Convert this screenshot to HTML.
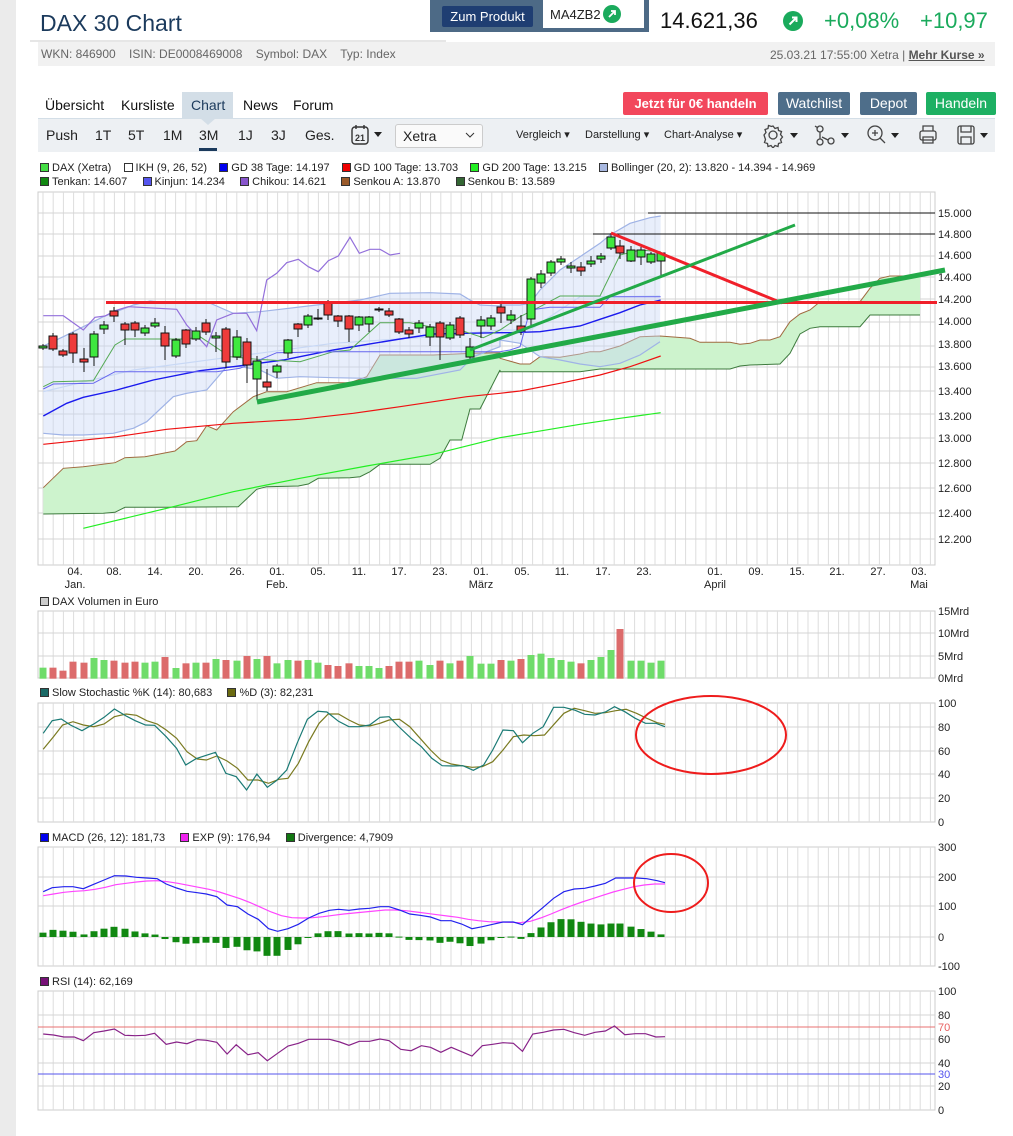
<!DOCTYPE html>
<html><head><meta charset="utf-8">
<style>
*{margin:0;padding:0;box-sizing:border-box}
html,body{width:1013px;height:1136px;overflow:hidden;background:#fff;font-family:"Liberation Sans",sans-serif;position:relative}
.a{position:absolute;white-space:nowrap}
.n{font-family:"Liberation Sans Narrow","Liberation Sans",sans-serif}
.lg{font-size:11px;color:#222}
.sq{display:inline-block;width:9px;height:9px;border:1px solid #333;vertical-align:-1px;margin-right:3px}
.ax{font-size:11px;color:#222}
.btn{position:absolute;color:#fff;font-size:14px;text-align:center;line-height:23px;border-radius:2px}
.tab{font-size:14px;color:#111}
.tb{font-size:14px;color:#222}
</style></head><body>
<div class="a" style="left:0;top:0;width:16px;height:1136px;background:#ebebeb"></div>
<div class="a" style="left:40px;top:10px;font-size:23px;color:#1b3a5c">DAX 30 Chart</div>
<div class="a" style="left:30px;top:40px;width:416px;height:2px;background:#e6e6e6"></div>
<div class="a" style="left:430px;top:0;width:219px;height:32px;background:#4d6a86"></div>
<div class="a" style="left:543px;top:0;width:101px;height:28px;background:#fff"></div>
<div class="btn n" style="left:442px;top:6px;width:91px;height:21px;line-height:21px;background:#1f3e72;font-size:13px">Zum Produkt</div>
<div class="a n" style="left:550px;top:7px;font-size:13px;color:#222">MA4ZB2</div>
<svg class="a" style="left:603px;top:5px" width="18" height="18"><circle cx="9" cy="9" r="9" fill="#1aaa5c"/><path d="M6 12L12 6M8 6h4v4" stroke="#fff" stroke-width="1.8" fill="none"/></svg>
<div class="a" style="left:660px;top:8px;font-size:22px;color:#111">14.621,36</div>
<svg class="a" style="left:783px;top:11px" width="20" height="20"><circle cx="10" cy="10" r="10" fill="#1aaa5c"/><path d="M6.5 13.5L13.5 6.5M9 6.5h4.5v4.5" stroke="#fff" stroke-width="2" fill="none"/></svg>
<div class="a" style="left:824px;top:8px;font-size:22px;color:#1aaa5c">+0,08%</div>
<div class="a" style="left:920px;top:8px;font-size:22px;color:#1aaa5c">+10,97</div>
<div class="a" style="left:38px;top:42px;width:957px;height:24px;background:#f1f1f1"></div>
<div class="a" style="left:41px;top:47px;font-size:12px;color:#666">WKN: 846900 &nbsp;&nbsp; ISIN: DE0008469008 &nbsp;&nbsp; Symbol: DAX &nbsp;&nbsp; Typ: Index</div>
<div class="a" style="left:770px;top:48px;font-size:12px;color:#666">25.03.21 17:55:00 Xetra | <b style="text-decoration:underline;color:#555">Mehr Kurse »</b></div>

<div class="a" style="left:182px;top:92px;width:51px;height:26px;background:#d3dee7"></div>
<div class="a tab" style="left:45px;top:97px">Übersicht</div>
<div class="a tab" style="left:121px;top:97px">Kursliste</div>
<div class="a tab" style="left:191px;top:97px;color:#1b3a5c">Chart</div>
<div class="a tab" style="left:243px;top:97px">News</div>
<div class="a tab" style="left:293px;top:97px">Forum</div>
<div class="btn" style="left:623px;top:92px;width:145px;background:#f2475c;font-weight:bold;font-size:13px">Jetzt für 0€ handeln</div>
<div class="btn" style="left:778px;top:92px;width:72px;background:#4e6e8a">Watchlist</div>
<div class="btn" style="left:860px;top:92px;width:57px;background:#4e6e8a">Depot</div>
<div class="btn" style="left:926px;top:92px;width:70px;background:#1db063">Handeln</div>

<div class="a" style="left:38px;top:118px;width:957px;height:34px;background:#edf0f3;border-top:1px solid #d3dee7"></div>
<svg class="a" style="left:200px;top:118px" width="16" height="8"><path d="M0 0L8 7L16 0Z" fill="#d3dee7"/></svg>
<div class="a tb" style="left:46px;top:127px">Push</div>
<div class="a tb" style="left:95px;top:127px">1T</div>
<div class="a tb" style="left:128px;top:127px">5T</div>
<div class="a tb" style="left:163px;top:127px">1M</div>
<div class="a tb" style="left:199px;top:127px">3M</div>
<div class="a" style="left:199px;top:148px;width:18px;height:3px;background:#1b3a5c"></div>
<div class="a tb" style="left:238px;top:127px">1J</div>
<div class="a tb" style="left:271px;top:127px">3J</div>
<div class="a tb" style="left:305px;top:127px">Ges.</div>
<svg class="a" style="left:350px;top:124px" width="36" height="22"><rect x="2" y="3" width="16" height="17" rx="3" fill="none" stroke="#333" stroke-width="1.4"/><path d="M6 1v4M14 1v4" stroke="#333" stroke-width="1.4"/><text x="10" y="17" font-size="9" font-family="Liberation Sans" text-anchor="middle" font-weight="bold" fill="#333">21</text><path d="M24 8h8l-4 5z" fill="#222"/></svg>
<div class="a" style="left:395px;top:124px;width:88px;height:24px;background:#fafafa;border:1px solid #ccc;border-radius:3px"></div>
<div class="a tb" style="left:403px;top:128px">Xetra</div>
<svg class="a" style="left:465px;top:131px" width="10" height="8"><path d="M1 2l4 4 4-4" stroke="#333" fill="none"/></svg>
<div class="a n" style="left:516px;top:128px;font-size:11px;color:#222">Vergleich ▾</div>
<div class="a n" style="left:585px;top:128px;font-size:11px;color:#222">Darstellung ▾</div>
<div class="a n" style="left:664px;top:128px;font-size:11px;color:#222">Chart-Analyse ▾</div>
<svg class="a" style="left:760px;top:122px" width="240" height="26">
<g fill="none" stroke="#444" stroke-width="1.3">
<circle cx="13" cy="13" r="4"/><path d="M13 4l2 2.5 3-1 .5 3 3 1-1 3 2 2.5-2 2.5 1 3-3 1-.5 3-3-1-2 2.5-2-2.5-3 1-.5-3-3-1 1-3L4 13l2-2.5-1-3 3-1 .5-3 3 1z"/>
<circle cx="60" cy="7" r="3"/><circle cx="60" cy="20" r="3"/><circle cx="71" cy="19" r="3"/><path d="M60 10v7M62 15l6 3M58 6l-3-2"/>
<circle cx="115" cy="11" r="7"/><path d="M120 16l5 5M112 11h6M115 8v6"/>
<rect x="160" y="9" width="16" height="9" rx="2"/><path d="M163 9V4h10v5M163 15h10v6h-10z"/>
<rect x="198" y="4" width="16" height="18" rx="2"/><path d="M201 4v6h10V4M201 22v-7h10v7"/>
</g>
<g fill="#222"><path d="M30 11h8l-4 5z"/><path d="M81 11h8l-4 5z"/><path d="M131 11h8l-4 5z"/><path d="M220 11h8l-4 5z"/></g>
</svg>

<div class="a lg" style="left:40px;top:162px"><span class="sq" style="background:#44dd44"></span>DAX (Xetra) &nbsp;&nbsp; <span class="sq" style="background:#fff"></span>IKH (9, 26, 52) &nbsp;&nbsp; <span class="sq" style="background:#0000ee"></span>GD 38 Tage: 14.197 &nbsp;&nbsp; <span class="sq" style="background:#ee0000"></span>GD 100 Tage: 13.703 &nbsp;&nbsp; <span class="sq" style="background:#22ee22"></span>GD 200 Tage: 13.215 &nbsp;&nbsp; <span class="sq" style="background:#a8b8e0"></span>Bollinger (20, 2): 13.820 - 14.394 - 14.969</div>
<div class="a lg" style="left:40px;top:176px"><span class="sq" style="background:#118811"></span>Tenkan: 14.607 &nbsp;&nbsp;&nbsp; <span class="sq" style="background:#5555ee"></span>Kinjun: 14.234 &nbsp;&nbsp;&nbsp; <span class="sq" style="background:#8855cc"></span>Chikou: 14.621 &nbsp;&nbsp;&nbsp; <span class="sq" style="background:#9a5a2a"></span>Senkou A: 13.870 &nbsp;&nbsp;&nbsp; <span class="sq" style="background:#336633"></span>Senkou B: 13.589</div>

<svg id="g" class="a" style="left:0;top:0" width="1013" height="1136" font-family="Liberation Sans" font-size="11" fill="#222">
<g id="dyn"></g>
<g>
<text x="938" y="217">15.000</text><text x="938" y="238">14.800</text><text x="938" y="259">14.600</text><text x="938" y="281">14.400</text><text x="938" y="303">14.200</text><text x="938" y="325">14.000</text><text x="938" y="348">13.800</text><text x="938" y="370">13.600</text><text x="938" y="395">13.400</text><text x="938" y="420">13.200</text><text x="938" y="442">13.000</text><text x="938" y="467">12.800</text><text x="938" y="492">12.600</text><text x="938" y="517">12.400</text><text x="938" y="543">12.200</text>
</g>
<g text-anchor="middle">
<text x="75" y="575">04.</text><text x="75" y="588">Jan.</text><text x="114" y="575">08.</text><text x="155" y="575">14.</text><text x="196" y="575">20.</text><text x="237" y="575">26.</text><text x="277" y="575">01.</text><text x="277" y="588">Feb.</text><text x="318" y="575">05.</text><text x="359" y="575">11.</text><text x="399" y="575">17.</text><text x="440" y="575">23.</text><text x="481" y="575">01.</text><text x="481" y="588">März</text><text x="522" y="575">05.</text><text x="562" y="575">11.</text><text x="603" y="575">17.</text><text x="644" y="575">23.</text><text x="715" y="575">01.</text><text x="715" y="588">April</text><text x="756" y="575">09.</text><text x="797" y="575">15.</text><text x="837" y="575">21.</text><text x="878" y="575">27.</text><text x="919" y="575">03.</text><text x="919" y="588">Mai</text>
</g>
<g>
<text x="938" y="615">15Mrd</text><text x="938" y="637">10Mrd</text><text x="938" y="660">5Mrd</text><text x="938" y="682">0Mrd</text>
<text x="938" y="707">100</text><text x="938" y="731">80</text><text x="938" y="755">60</text><text x="938" y="778">40</text><text x="938" y="802">20</text><text x="938" y="826">0</text>
<text x="938" y="851">300</text><text x="938" y="881">200</text><text x="938" y="910">100</text><text x="938" y="941">0</text><text x="938" y="970">-100</text>
<text x="938" y="995">100</text><text x="938" y="1019">80</text><text x="938" y="1031" fill="#e86060">70</text><text x="938" y="1043">60</text><text x="938" y="1067">40</text><text x="938" y="1078" fill="#5555ee">30</text><text x="938" y="1090">20</text><text x="938" y="1114">0</text>
</g>
</svg>
<div class="a lg" style="left:40px;top:596px"><span class="sq" style="background:#ccc"></span>DAX Volumen in Euro</div>
<div class="a lg" style="left:40px;top:687px"><span class="sq" style="background:#1a6a66"></span>Slow Stochastic %K (14): 80,683 &nbsp;&nbsp;&nbsp; <span class="sq" style="background:#6a6a10"></span>%D (3): 82,231</div>
<div class="a lg" style="left:40px;top:832px"><span class="sq" style="background:#0000ee"></span>MACD (26, 12): 181,73 &nbsp;&nbsp;&nbsp; <span class="sq" style="background:#ee22ee"></span>EXP (9): 176,94 &nbsp;&nbsp;&nbsp; <span class="sq" style="background:#117711"></span>Divergence: 4,7909</div>
<div class="a lg" style="left:40px;top:976px"><span class="sq" style="background:#771177"></span>RSI (14): 62,169</div>

<script>
(function(){
var NS="http://www.w3.org/2000/svg",G=document.getElementById("dyn");
function el(t,a){var e=document.createElementNS(NS,t);for(var k in a)e.setAttribute(k,a[k]);G.appendChild(e);return e;}
function pl(pts,st,w,fill){el(fill?"polygon":"polyline",{points:pts.map(function(p){return p[0].toFixed(1)+","+p[1].toFixed(1)}).join(" "),stroke:st||"none","stroke-width":w||1,fill:fill||"none"});}
function Z2(a){var r=[];for(var i=0;i<a.length;i+=2)r.push([a[i]/3,190+a[i+1]/3]);return r;}
function Z3(a){var r=[];for(var i=0;i<a.length;i+=2)r.push([480+a[i]/3,190+a[i+1]/3]);return r;}
function ZL(a,b){var r=[];for(var i=0;i<a.length;i+=2)r.push([38+(a[i]-60)*0.6477,b+a[i+1]/3]);return r;}
function grid(y0,y1,hs){
 el("rect",{x:38,y:y0,width:897,height:y1-y0,fill:"#fff",stroke:"#ccc"});
 for(var x=43;x<935;x+=10.2)el("line",{x1:x.toFixed(1),y1:y0,x2:x.toFixed(1),y2:y1,stroke:"#ddd"});
 hs.forEach(function(y){el("line",{x1:38,y1:y,x2:935,y2:y,stroke:"#d4d4d4"});});
}
grid(192,565,[213,234,256,277,299,322,346,367,391,414,438,463,488,513,539]);
grid(611,678,[633,656]);
grid(703,822,[727,751,774,798]);
grid(847,966,[877,906,937]);
grid(991,1110,[1015,1039,1063,1086]);
// Ichimoku cloud
var A=Z2([130,893,190,835,250,830,345,818,375,803,435,800,525,783,560,755,590,752,620,707,650,720,700,665,760,620,800,605,860,605,950,578,1050,578,1100,560,1140,495,1300,495,1420,490,1500,488]).concat(Z3([60,505,120,522,150,522,180,500,240,502,300,492,330,485,360,485,420,468,480,440,540,438,570,440,630,445,660,457,750,457,780,463,810,460,840,450,870,450,900,440,930,395,960,372,990,360,1020,335,1140,335,1170,295,1200,265,1230,258,1320,258]));
var B=Z2([130,972,310,970,345,967,375,952,500,952,715,950,770,898,800,890,895,888,925,882,955,865,1050,863,1080,860,1110,845,1140,823,1290,823,1320,805,1350,750,1385,750,1410,657,1440,657,1500,540]).concat(Z3([60,545,300,545,360,537,750,537,780,528,810,525,900,522,930,490,960,432,990,415,1020,410,1140,410,1170,375,1320,375]));
pl(A.concat(B.slice().reverse()),null,0,"#cdf3cd");
pl(A,"#a06a40",1);pl(B,"#3d7a3d",1);
// Bollinger
var U=Z2([130,468,190,440,250,410,310,380,400,345,450,333,520,340,620,335,700,370,780,365,950,345,1080,330,1170,310,1290,308,1380,312,1410,330,1440,345,1500,348]).concat(Z3([60,345,120,345,150,340,180,300,240,240,300,200,360,160,390,135,450,100,510,83,542,78]));
var L=Z2([130,730,190,735,250,735,340,730,400,715,440,695,520,620,560,610,620,600,680,530,720,530,780,540,830,565,900,560,1000,563,1100,565,1250,565,1380,540,1420,500,1500,470]).concat(Z3([60,450,120,460,150,480,180,500,240,510,300,522,360,530,420,520,480,495,540,455]));
pl(U.concat(L.slice().reverse()),null,0,"rgba(200,215,245,0.42)");
pl(U,"#9fb3e6",1.2);pl(L,"#9fb3e6",1.2);
pl(Z2([130,605,400,540,700,500,1000,460,1300,440,1500,420]).concat(Z3([150,420,300,320,420,320,540,318])),"#c8d8f5",1.2);
// GDs
pl(Z2([130,763,350,740,500,718,700,700,900,688,1060,670,1200,650,1400,620,1500,610]).concat(Z3([120,603,240,580,360,555,450,530,542,498])),"#ee1111",1.2);
pl(Z2([250,1015,500,955,700,905,900,865,1100,828,1300,793,1500,743]).concat(Z3([150,728,300,703,420,685,542,668])),"#22ee22",1.2);
pl(Z2([130,678,200,640,250,622,350,600,460,570,600,542,700,530,850,510,1000,480,1200,447,1300,432,1400,430,1500,428]).concat(Z3([90,428,180,425,300,408,360,388,420,368,480,345,542,330])),"#1a1aee",1.4);
// Tenkan/Kijun/Chikou
pl(Z2([130,590,160,575,280,572,345,465,375,447,560,447,600,440,690,500,770,508,900,515,1000,485,1050,480,1140,398,1230,398,1290,410,1380,420,1450,443,1500,420]).concat(Z3([60,420,120,380,180,350,240,318,360,318,420,195,480,180,542,185])),"#55aa55",1);
pl(Z2([130,597,160,582,280,580,345,545,650,545,720,535,830,488,1000,485,1500,485]).concat(Z3([90,480,120,470,150,360,210,352,360,352,390,320,542,320])),"#6666ee",1);
pl(Z2([130,377,190,377,250,420,285,382,315,378,345,362,385,350,530,358,560,405,620,470,650,390,700,370,740,370,770,422,800,270,830,250,860,218,895,208,925,230,955,245,985,212,1015,198,1050,142,1078,190,1110,178,1140,178,1170,195,1200,190]),"#9370db",1.2);
// candles
var C=[[43,346,348,"g"],[53,336,349,"r",333,351],[63,351,355,"r"],[73,334,353,"r",332,363],[84,359,362,"r",348,372],[94,334,357,"g",331,366],[104,325,329,"g",321,334],[114,311,316,"r",307,322],[125,324,330,"r",322,345],[135,323,330,"r",321,337],[145,328,333,"g",325,336],[155,323,326,"g",318,328],[165,333,346,"r",326,360],[176,340,356,"g"],[186,330,344,"r",329,348],[196,331,339,"g",327,341],[206,323,332,"r",319,335],[216,336,338,"g",332,352],[226,329,362,"r",327,368],[237,337,357,"g",330,360],[247,342,365,"r",338,383],[257,361,379,"g",356,400],[267,382,387,"r",369,391],[277,366,372,"g",364,378],[288,340,353,"g",339,358],[298,324,329,"r",323,337],[308,316,325,"g",314,328],[318,318,319,"g",309,320],[328,303,315,"r",300,320],[338,316,321,"r",315,327],[349,316,329,"r",315,342],[359,317,325,"g",316,331],[369,317,324,"g",316,332],[379,309,310,"g",307,312],[389,311,315,"r",308,317],[399,319,332,"r",318,334],[409,330,334,"r",327,338],[419,323,328,"g",320,333],[430,327,337,"g",324,346],[440,323,337,"r",321,360],[450,325,338,"g",322,340],[460,318,335,"r",316,338],[470,347,357,"g",338,360],[481,320,326,"g",316,338],[491,318,326,"g",315,330],[501,307,313,"r",302,323],[511,315,320,"g",310,324],[521,326,331,"r",315,335],[531,279,319,"g",277,326],[541,274,283,"g",270,288],[551,262,273,"g",260,276],[561,259,262,"g",256,265],[571,266,268,"g",262,273],[581,267,271,"r",262,276],[591,261,264,"g",256,267],[601,256,259,"g",253,263],[611,237,248,"g",233,250],[620,246,253,"r",240,259],[631,250,261,"g",246,262],[641,250,257,"g",247,265],[651,254,262,"g",252,264],[661,253,261,"g",252,276]];
C.forEach(function(c){var wt=c[4]||c[1]-2,wb=c[5]||c[2]+2;
 el("line",{x1:c[0],y1:wt,x2:c[0],y2:wb,stroke:"#111"});
 el("rect",{x:c[0]-4,y:c[1],width:8,height:Math.max(1,c[2]-c[1]),fill:c[3]=="g"?"#3fe83f":"#ee3b3b",stroke:"#111","stroke-width":1});});
// trendlines
el("line",{x1:648,y1:213,x2:935,y2:213,stroke:"#111"});
el("line",{x1:593,y1:234,x2:935,y2:234,stroke:"#111"});
el("line",{x1:106,y1:302.5,x2:937,y2:302.5,stroke:"#f0202a","stroke-width":3});
el("line",{x1:611,y1:233,x2:782,y2:303,stroke:"#f0202a","stroke-width":3});
el("line",{x1:257,y1:402,x2:945,y2:270,stroke:"#22aa48","stroke-width":5});
el("line",{x1:470,y1:350,x2:795,y2:225,stroke:"#22aa48","stroke-width":3});
// volume
var V=[233,233,242,215,218,204,210,212,218,215,218,215,201,234,220,218,218,207,210,212,198,207,198,220,210,212,210,218,225,228,220,228,228,234,228,215,215,212,225,212,220,212,198,221,221,210,212,207,195,191,204,210,215,220,210,201,180,117,212,212,218,212];
C.forEach(function(c,i){var t=590+V[i]/3;el("rect",{x:c[0]-3.5,y:t,width:7,height:678.7-t,fill:c[3]=="g"?"#6fdc6a":"#dc6b6b"});});
// stoch
pl(ZL([68,478,84,440,98,405,114,395,130,405,146,410,162,402,178,380,196,372,212,376,228,392,244,402,258,420,274,445,290,485,306,507,320,510,336,498,352,513,368,535,384,570,400,570,416,580,432,568,446,565,462,520,478,455,494,400,508,372,524,372,540,390,556,405,572,408,588,400,602,390,618,388,634,410,650,445,666,480,682,510,698,522,714,527,730,532,746,530,762,515,778,480,794,440,810,435,826,437,842,435,858,400,872,370,888,355,904,362,920,370,936,368,952,362,968,358,984,370,1000,385,1016,398,1028,403],590),"#7a7a20",1.2);
pl(ZL([68,430,82,392,96,387,110,405,128,422,148,400,162,382,178,357,196,378,210,392,226,405,240,406,258,440,274,475,288,525,304,506,318,497,334,487,350,550,366,560,382,600,398,552,414,592,428,572,444,540,460,460,476,388,492,364,506,366,524,394,540,410,556,410,572,405,588,382,602,380,616,408,636,445,652,470,668,505,684,527,700,528,716,527,732,541,748,525,762,480,778,420,794,422,808,458,824,430,840,410,856,352,872,352,888,360,904,373,920,375,936,366,950,350,966,365,982,385,998,400,1014,400,1028,410],590),"#1a7a75",1.2);
el("ellipse",{cx:711,cy:735,rx:75,ry:39,fill:"none",stroke:"#ee1c1c","stroke-width":2});
// MACD
var MB=ZL([68,185,82,173,100,170,114,170,130,176,146,163,162,150,178,137,196,138,212,142,228,144,244,146,258,162,274,174,290,184,306,188,320,192,336,200,352,225,368,230,384,252,400,268,416,296,430,304,446,296,462,283,478,264,494,250,510,241,524,238,540,241,556,237,572,235,588,230,602,230,618,240,634,252,650,256,666,261,682,272,698,272,714,282,730,296,746,290,762,283,778,276,794,276,808,284,824,258,840,232,856,205,872,185,888,177,904,175,920,168,936,160,952,144,968,144,984,144,1000,146,1016,152,1028,158],830);
var ME=ZL([68,197,84,192,100,187,116,184,132,182,148,178,164,172,180,164,196,160,212,156,228,153,244,152,260,155,276,160,292,166,308,172,324,178,340,186,356,196,372,206,388,218,404,232,420,246,436,257,452,263,468,264,484,263,500,260,516,256,532,252,548,249,564,246,580,243,596,240,612,240,628,242,644,246,660,250,676,254,692,258,708,262,724,268,740,272,756,275,772,276,788,277,804,278,820,274,836,264,852,252,868,239,884,227,900,216,916,206,932,196,948,186,964,178,980,170,996,165,1012,162,1028,162],830);
function itp(P,x){for(var i=1;i<P.length;i++)if(P[i][0]>=x){var a=P[i-1],b=P[i],t=(x-a[0])/(b[0]-a[0]||1);return a[1]+t*(b[1]-a[1]);}return P[P.length-1][1];}
C.forEach(function(c){var d=(itp(ME,c[0])-itp(MB,c[0]))*1.1;var y=d>0?937-d:937;el("rect",{x:c[0]-3.5,y:y,width:7,height:Math.max(1,Math.abs(d)),fill:"#118811"});});
pl(ME,"#ff44ff",1.2);pl(MB,"#2222ee",1.2);
el("ellipse",{cx:671,cy:883,rx:37,ry:29,fill:"none",stroke:"#ee1c1c","stroke-width":2});
// RSI
el("line",{x1:38,y1:1027,x2:935,y2:1027,stroke:"#e87070"});
el("line",{x1:38,y1:1074,x2:935,y2:1074,stroke:"#5555ee"});
pl(ZL([68,612,84,615,100,621,116,621,130,632,146,608,162,603,178,597,194,616,210,617,226,616,240,610,258,643,274,636,290,641,306,629,320,631,336,637,352,672,366,644,384,674,400,668,414,692,430,670,446,648,462,640,478,628,494,628,510,628,526,636,540,646,556,634,572,634,588,627,602,632,620,658,636,662,652,647,666,652,682,667,698,652,714,665,730,678,746,647,762,643,778,638,794,640,808,664,824,612,840,607,856,600,872,598,888,608,904,616,920,607,936,603,950,588,966,614,982,611,998,611,1014,621,1028,620],830),"#882288",1.2);
var g=document.getElementById("g");g.insertBefore(G,g.firstChild);
})();
</script>
</body></html>
